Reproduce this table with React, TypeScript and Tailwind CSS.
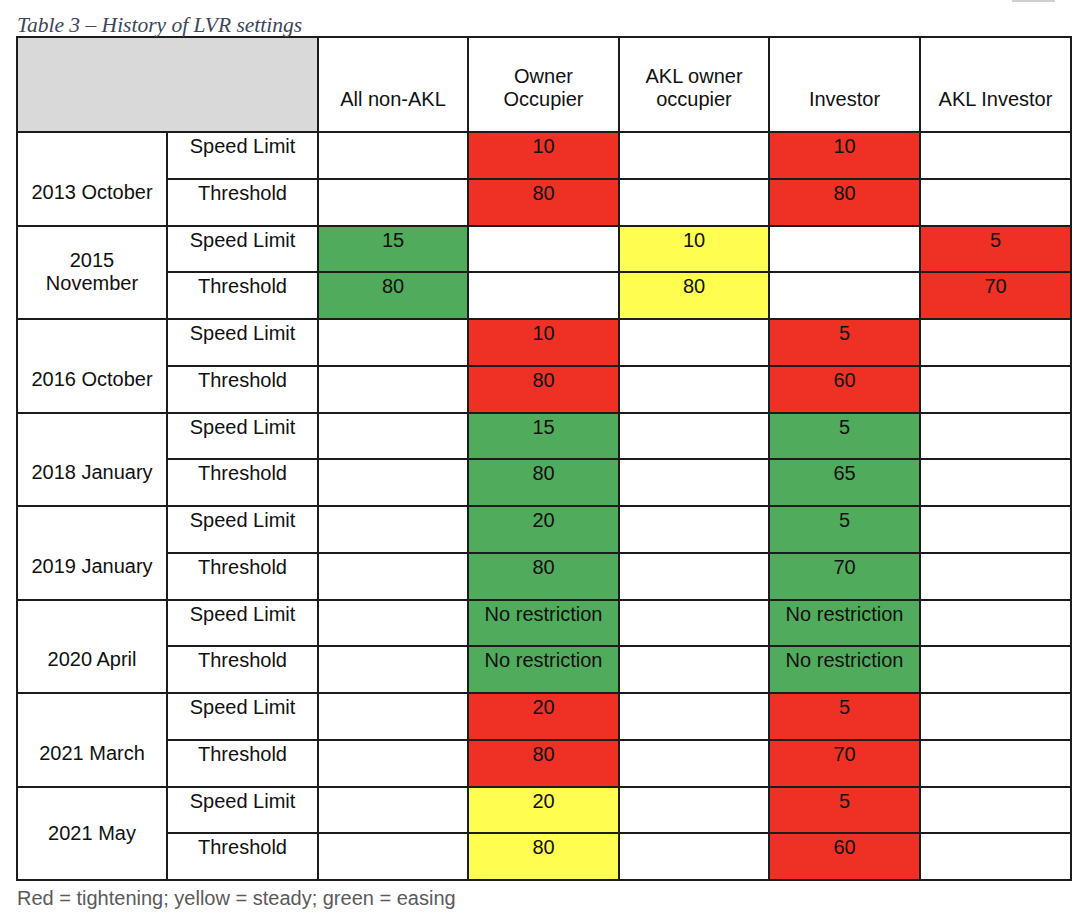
import React from "react";

type Tone = "red" | "green" | "yellow" | "";

type Period = {
  label: string[];
  shift: boolean;
  speed: [string, Tone][];
  threshold: [string, Tone][];
};

const toneClass: Record<string, string> = {
  red: "bg-[#ee3124]",
  green: "bg-[#50ac5c]",
  yellow: "bg-[#fefd50]",
  "": "bg-white",
};

const E: [string, Tone] = ["", ""];

const periods: Period[] = [
  {
    label: ["2013 October"],
    shift: true,
    speed: [E, ["10", "red"], E, ["10", "red"], E],
    threshold: [E, ["80", "red"], E, ["80", "red"], E],
  },
  {
    label: ["2015", "November"],
    shift: false,
    speed: [["15", "green"], E, ["10", "yellow"], E, ["5", "red"]],
    threshold: [["80", "green"], E, ["80", "yellow"], E, ["70", "red"]],
  },
  {
    label: ["2016 October"],
    shift: true,
    speed: [E, ["10", "red"], E, ["5", "red"], E],
    threshold: [E, ["80", "red"], E, ["60", "red"], E],
  },
  {
    label: ["2018 January"],
    shift: true,
    speed: [E, ["15", "green"], E, ["5", "green"], E],
    threshold: [E, ["80", "green"], E, ["65", "green"], E],
  },
  {
    label: ["2019 January"],
    shift: true,
    speed: [E, ["20", "green"], E, ["5", "green"], E],
    threshold: [E, ["80", "green"], E, ["70", "green"], E],
  },
  {
    label: ["2020 April"],
    shift: true,
    speed: [E, ["No restriction", "green"], E, ["No restriction", "green"], E],
    threshold: [E, ["No restriction", "green"], E, ["No restriction", "green"], E],
  },
  {
    label: ["2021 March"],
    shift: true,
    speed: [E, ["20", "red"], E, ["5", "red"], E],
    threshold: [E, ["80", "red"], E, ["70", "red"], E],
  },
  {
    label: ["2021 May"],
    shift: false,
    speed: [E, ["20", "yellow"], E, ["5", "red"], E],
    threshold: [E, ["80", "yellow"], E, ["60", "red"], E],
  },
];

const headers = [["All non-AKL"], ["Owner", "Occupier"], ["AKL owner", "occupier"], ["Investor"], ["AKL Investor"]];

function Cell({ value, tone }: { value: string; tone: Tone }) {
  return (
    <div className={`flex justify-center pt-[2px] ${toneClass[tone]}`}>{value}</div>
  );
}

export default function App() {
  return (
    <div className="min-h-[923px] w-[1080px] bg-white font-['Liberation_Sans',Arial,sans-serif] text-[20px] leading-[23px] text-[#111]">
      <div className="ml-[1012px] h-[2px] w-[43px] bg-[#cfcfcf]" />
      <div className="ml-[17px] mt-[10px] h-[24px] font-['Liberation_Serif','Times_New_Roman',serif] text-[21.5px] italic leading-[26px] text-[#3b4658]">
        Table 3 – History of LVR settings
      </div>

      <div className="ml-[16px] grid h-[845px] w-[1056px] grid-cols-[148px_149px_148px_149px_148px_149px_149px] grid-rows-[93px_repeat(16,1fr)] gap-[2px] bg-[#1c1c1c] p-[2px]">
        <div className="col-span-2 bg-[#d9d9d9]" />
        {headers.map((h, i) => (
          <div key={i} className="flex flex-col items-center justify-end bg-white pb-[20px] text-center">
            {h.map((line) => (
              <span key={line}>{line}</span>
            ))}
          </div>
        ))}

        {periods.map((p) => (
          <React.Fragment key={p.label.join(" ")}>
            <div
              className={`row-span-2 flex flex-col items-center justify-center bg-white text-center ${
                p.shift ? "pt-[27px]" : ""
              }`}
            >
              {p.label.map((line) => (
                <span key={line}>{line}</span>
              ))}
            </div>
            <div className="flex justify-center bg-white pt-[2px]">Speed Limit</div>
            {p.speed.map(([v, t], i) => (
              <Cell key={`s${i}`} value={v} tone={t} />
            ))}
            <div className="flex justify-center bg-white pt-[2px]">Threshold</div>
            {p.threshold.map(([v, t], i) => (
              <Cell key={`t${i}`} value={v} tone={t} />
            ))}
          </React.Fragment>
        ))}
      </div>

      <div className="ml-[17px] mt-[6px] text-[#5a5a5a]">
        Red = tightening; yellow = steady; green = easing
      </div>
    </div>
  );
}
